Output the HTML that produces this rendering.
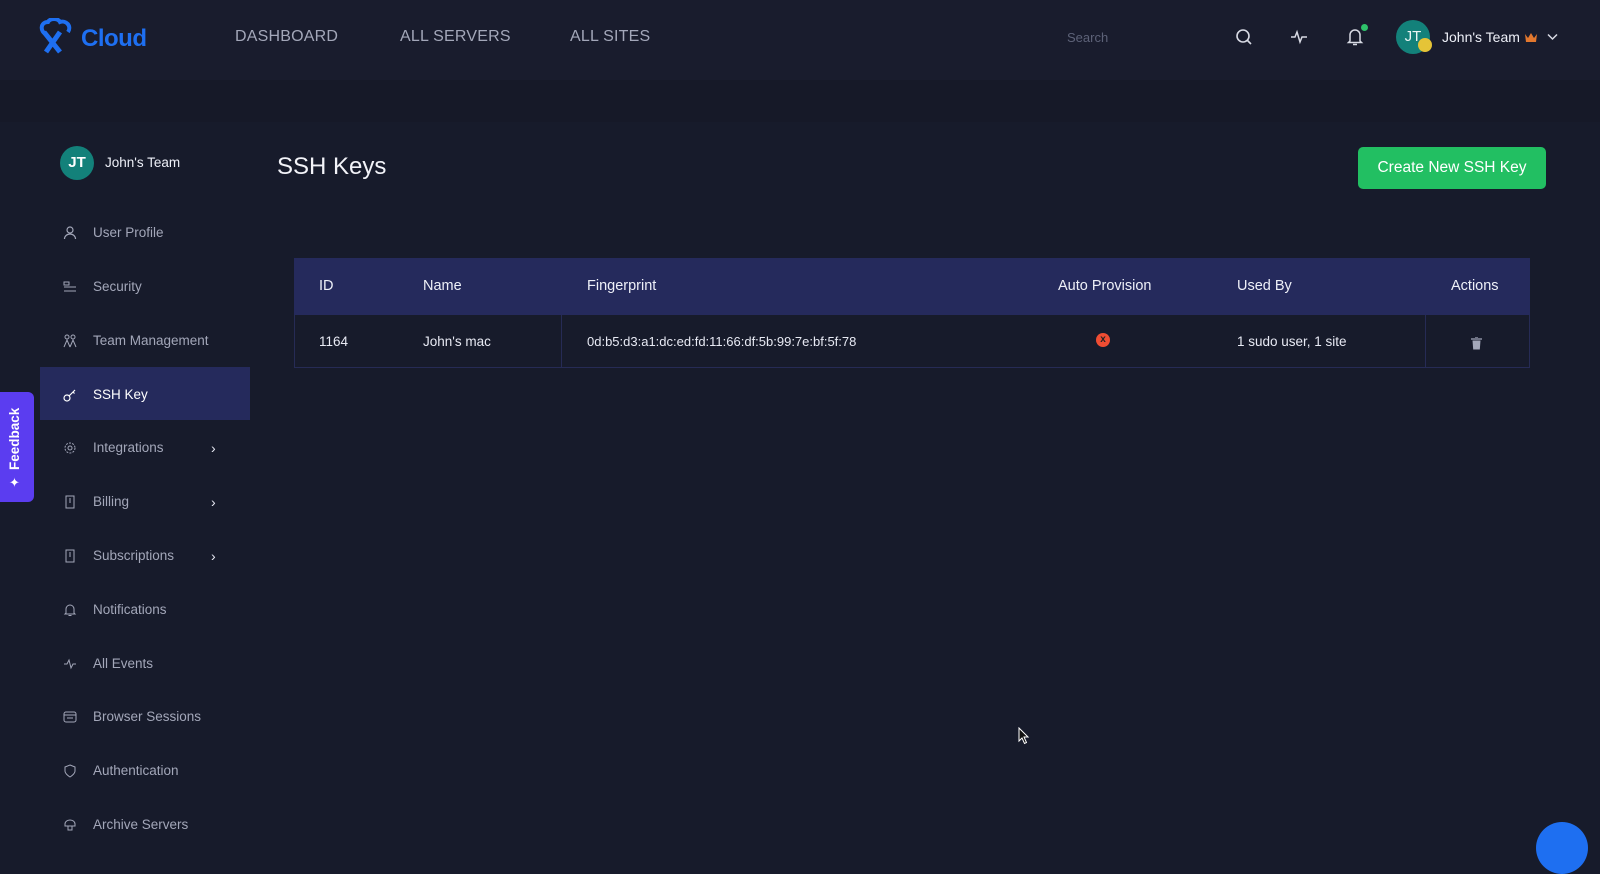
<!DOCTYPE html>
<html><head><meta charset="utf-8"><style>
*{margin:0;padding:0;box-sizing:border-box}
body{width:1600px;height:836px;overflow:hidden;background:#171b2b;font-family:"Liberation Sans",sans-serif;color:#e8eaf4;position:relative}
.hdr{position:absolute;left:0;top:0;width:1600px;height:80px;background:#191c2d}
.band{position:absolute;left:0;top:80px;width:1600px;height:42px;background:#161928}
.nav{position:absolute;top:28px;font-size:16px;color:#a3a7b9;letter-spacing:.2px}
.abs{position:absolute}
.mi{position:absolute;left:0;width:260px;height:20px;font-size:13.5px;color:#a3a7b9}
.mi span{position:absolute;left:93px;top:2px}
.mi svg{position:absolute;left:63px;top:3px}
.chev{position:absolute;left:211px;top:2px;color:#e8eaf4;font-size:14px}
.th{position:absolute;top:278px;font-size:14.5px;color:#eef0f8}
.td{position:absolute;top:334px;font-size:13.5px;color:#e8eaf4}
</style></head><body>
<div class="hdr"></div>
<div class="band"></div>
<svg class="abs" style="left:38px;top:18px" width="40" height="36" viewBox="0 0 40 36">
<path d="M8 16 C2 14 2 4 10 4 C12 0 20 0 22 4 C28 2 34 8 30 14" fill="none" stroke="#1e6ff1" stroke-width="4"/>
<path d="M6 14 L22 34 M22 14 L8 34" stroke="#1e6ff1" stroke-width="5" fill="none"/>
</svg>
<div class="abs" style="left:81px;top:25px;font-size:24px;font-weight:bold;color:#1e6ff1;letter-spacing:-.5px">Cloud</div>
<div class="nav" style="left:235px">DASHBOARD</div>
<div class="nav" style="left:400px">ALL SERVERS</div>
<div class="nav" style="left:570px">ALL SITES</div>
<div class="abs" style="left:1067px;top:30px;font-size:13px;color:#5d6278">Search</div>
<svg class="abs" style="left:1235px;top:28px" width="18" height="18" viewBox="0 0 18 18"><circle cx="8" cy="8" r="6" fill="none" stroke="#d8dae4" stroke-width="1.6"/><path d="M12.5 12.5L16 16" stroke="#d8dae4" stroke-width="1.6"/></svg>
<svg class="abs" style="left:1290px;top:29px" width="18" height="16" viewBox="0 0 18 16"><path d="M1 8H5L7 3L10 13L12 8H17" fill="none" stroke="#d8dae4" stroke-width="1.5"/></svg>
<svg class="abs" style="left:1346px;top:27px" width="18" height="20" viewBox="0 0 18 20"><path d="M4 14V8a5 5 0 0 1 10 0v6l1.5 1.5h-13z M7 17.5h4" fill="none" stroke="#d8dae4" stroke-width="1.5"/></svg>
<div class="abs" style="left:1361px;top:24px;width:7px;height:7px;border-radius:50%;background:#2ec26a"></div>
<div class="abs" style="left:1396px;top:20px;width:34px;height:34px;border-radius:50%;background:#13817a;color:#e8f4f4;font-size:15px;text-align:center;line-height:34px">JT</div>
<div class="abs" style="left:1418px;top:38px;width:14px;height:14px;border-radius:50%;background:#e5c437"></div>
<div class="abs" style="left:1442px;top:29px;font-size:14px;color:#eef0f8">John's Team</div>
<svg class="abs" style="left:1524px;top:32px" width="14" height="11" viewBox="0 0 14 11"><path d="M1 2L4 6L7 1L10 6L13 2L12 10H2Z" fill="#e3782e"/></svg>
<svg class="abs" style="left:1547px;top:33px" width="11" height="8" viewBox="0 0 11 8"><path d="M1 1.5L5.5 6L10 1.5" fill="none" stroke="#d8dae4" stroke-width="1.5"/></svg>

<div class="abs" style="left:60px;top:146px;width:34px;height:34px;border-radius:50%;background:#13817a;color:#fff;font-size:15px;font-weight:bold;text-align:center;line-height:34px">JT</div>
<div class="abs" style="left:105px;top:155px;font-size:13.5px;color:#eef0f8">John's Team</div>
<div class="abs" style="left:40px;top:367px;width:210px;height:53px;background:#252a5c"></div>

<div class="mi" style="top:223px"><svg width="14" height="14" viewBox="0 0 14 14"><circle cx="7" cy="4" r="3" fill="none" stroke="#a3a7b9" stroke-width="1.2"/><path d="M1.5 13a5.5 5 0 0 1 11 0" fill="none" stroke="#a3a7b9" stroke-width="1.2"/></svg><span>User Profile</span></div>
<div class="mi" style="top:277px"><svg width="14" height="14" viewBox="0 0 14 14"><rect x="1" y="2" width="5" height="3" fill="none" stroke="#a3a7b9"/><path d="M1 7h12M1 11h12" stroke="#a3a7b9"/></svg><span>Security</span></div>
<div class="mi" style="top:331px"><svg width="14" height="14" viewBox="0 0 14 14"><circle cx="4" cy="3" r="2" fill="none" stroke="#a3a7b9"/><circle cx="10" cy="3" r="2" fill="none" stroke="#a3a7b9"/><path d="M1 13L4 6L7 13M7 13L10 6L13 13" fill="none" stroke="#a3a7b9"/></svg><span>Team Management</span></div>
<div class="mi" style="top:385px;color:#fff"><svg width="14" height="14" viewBox="0 0 14 14"><circle cx="4" cy="10" r="3" fill="none" stroke="#fff" stroke-width="1.2"/><path d="M6 8L12 2M10 4l1.5 1.5" stroke="#fff" stroke-width="1.2"/></svg><span>SSH Key</span></div>
<div class="mi" style="top:438px"><svg width="14" height="14" viewBox="0 0 14 14"><circle cx="7" cy="7" r="5" fill="none" stroke="#a3a7b9" stroke-dasharray="2 1.2"/><circle cx="7" cy="7" r="2" fill="none" stroke="#a3a7b9"/></svg><span>Integrations</span><div class="chev">&#x203A;</div></div>
<div class="mi" style="top:492px"><svg width="14" height="14" viewBox="0 0 14 14"><rect x="3" y="1" width="8" height="12" fill="none" stroke="#a3a7b9"/><path d="M7 3v5" stroke="#a3a7b9"/></svg><span>Billing</span><div class="chev">&#x203A;</div></div>
<div class="mi" style="top:546px"><svg width="14" height="14" viewBox="0 0 14 14"><rect x="3" y="1" width="8" height="12" fill="none" stroke="#a3a7b9"/><path d="M7 3v5" stroke="#a3a7b9"/></svg><span>Subscriptions</span><div class="chev">&#x203A;</div></div>
<div class="mi" style="top:600px"><svg width="14" height="14" viewBox="0 0 14 14"><path d="M3 10V6a4 4 0 0 1 8 0v4l1 1H2z M5.5 12.5h3" fill="none" stroke="#a3a7b9"/></svg><span>Notifications</span></div>
<div class="mi" style="top:654px"><svg width="14" height="14" viewBox="0 0 14 14"><path d="M1 7H4L6 3L8 11L10 7H13" fill="none" stroke="#a3a7b9"/></svg><span>All Events</span></div>
<div class="mi" style="top:707px"><svg width="14" height="14" viewBox="0 0 14 14"><rect x="1" y="2" width="12" height="10" rx="2" fill="none" stroke="#a3a7b9"/><path d="M1 5h12M4 8h6" stroke="#a3a7b9"/></svg><span>Browser Sessions</span></div>
<div class="mi" style="top:761px"><svg width="14" height="14" viewBox="0 0 14 14"><path d="M7 1L12 3V7C12 10 7 13 7 13C7 13 2 10 2 7V3Z" fill="none" stroke="#a3a7b9"/></svg><span>Authentication</span></div>
<div class="mi" style="top:815px"><svg width="14" height="14" viewBox="0 0 14 14"><path d="M2 6a5 4 0 0 1 10 0v2H2z M5 8v4h4V8" fill="none" stroke="#a3a7b9"/></svg><span>Archive Servers</span></div>

<div class="abs" style="left:0;top:392px;width:34px;height:110px;background:#5b3df0;border-radius:0 6px 6px 0"></div>
<div class="abs" style="top:470px;left:7px;transform:rotate(-90deg);transform-origin:0 0;font-size:13.5px;color:#fff;white-space:nowrap;font-weight:bold">Feedback</div>
<div class="abs" style="left:9px;top:475px;color:#fff;font-size:13px">&#x2726;</div>

<div class="abs" style="left:277px;top:153px;font-size:24px;color:#f2f3f8">SSH Keys</div>
<div class="abs" style="left:1358px;top:147px;width:188px;height:42px;background:#22bf62;border-radius:5px;color:#fff;font-size:15.5px;text-align:center;line-height:42px">Create New SSH Key</div>

<div class="abs" style="left:294px;top:258px;width:1236px;height:110px;border:1px solid #262b55"></div>
<div class="abs" style="left:294px;top:258px;width:1236px;height:57px;background:#252a5c"></div>
<div class="abs" style="left:561px;top:315px;width:1px;height:53px;background:#262b55"></div>
<div class="abs" style="left:1425px;top:315px;width:1px;height:53px;background:#262b55"></div>
<div class="th" style="left:319px">ID</div>
<div class="th" style="left:423px">Name</div>
<div class="th" style="left:587px">Fingerprint</div>
<div class="th" style="left:1058px">Auto Provision</div>
<div class="th" style="left:1237px">Used By</div>
<div class="th" style="left:1451px">Actions</div>
<div class="td" style="left:319px">1164</div>
<div class="td" style="left:423px">John's mac</div>
<div class="td" style="left:587px;font-size:13px">0d:b5:d3:a1:dc:ed:fd:11:66:df:5b:99:7e:bf:5f:78</div>
<div class="abs" style="left:1096px;top:333px;width:14px;height:14px;border-radius:50%;background:#ef4d33;color:#222;font-size:10px;font-weight:bold;text-align:center;line-height:14px">x</div>
<div class="td" style="left:1237px">1 sudo user, 1 site</div>
<svg class="abs" style="left:1471px;top:337px" width="11" height="13" viewBox="0 0 11 13"><path d="M0 2h11M4 0h3" stroke="#a3a7b9" stroke-width="1.3"/><path d="M1.5 3.5h8l-.7 9h-6.6z" fill="#a3a7b9"/></svg>

<svg class="abs" style="left:1018px;top:727px" width="12" height="18" viewBox="0 0 12 18"><path d="M1 1V14L4 11L6.5 16.5L8.5 15.5L6 10H10Z" fill="#111" stroke="#fff" stroke-width="1"/></svg>
<div class="abs" style="left:1536px;top:822px;width:52px;height:52px;border-radius:50%;background:#1e6ff1"></div>
</body></html>
